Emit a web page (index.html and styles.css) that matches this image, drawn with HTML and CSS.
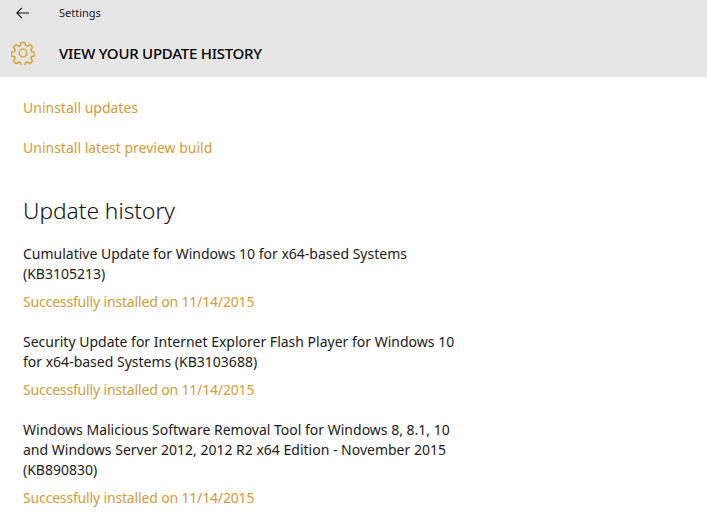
FILE: index.html
```html
<!DOCTYPE html>
<html lang="en">
<head>
<meta charset="utf-8">
<title>Settings</title>
<link rel="stylesheet" href="styles.css">
</head>
<body>
<header class="header">
  <div class="titlebar">
    <svg class="back" width="13" height="12" viewBox="0 0 13 12"><path d="M5.800.8.900 6l4.900 5.200M.9 6H13" fill="none" stroke="#111" stroke-width="1.100"/></svg>
    <span class="app">Settings</span>
  </div>
  <div class="pagebar">
    <svg class="gear" width="24" height="24" viewBox="0 0 26 26"><path d="M10.900 1.600h4.200l.6 3.200 2 .8 2.700-1.800 3 3-1.900 2.700.9 2 3.100.6v4.200l-3.100.6-.9 2 1.900 2.700-3 3-2.700-1.800-2 .8-.6 3.200h-4.200l-.6-3.200-2-.8-2.700 1.800-3-3 1.900-2.700-.9-2-3.100-.6v-4.200l3.100-.6.9-2-1.900-2.700 3-3 2.700 1.800 2-.8z" fill="none" stroke="#d9a233" stroke-width="1.600" stroke-linejoin="round"/><circle cx="13" cy="13" r="4.200" fill="none" stroke="#d9a233" stroke-width="1.600"/></svg>
    <h1 class="pagetitle">VIEW YOUR UPDATE HISTORY</h1>
  </div>
</header>
<main class="content">
  <a class="link first">Uninstall updates</a>
  <a class="link second">Uninstall latest preview build</a>
  <h2 class="section">Update history</h2>
  <section class="item">
    <p class="name">Cumulative Update for Windows 10 for x64-based Systems (KB3105213)</p>
    <p class="status">Successfully installed on 11/14/2015</p>
  </section>
  <section class="item">
    <p class="name">Security Update for Internet Explorer Flash Player for Windows 10 for x64-based Systems (KB3103688)</p>
    <p class="status">Successfully installed on 11/14/2015</p>
  </section>
  <section class="item">
    <p class="name">Windows Malicious Software Removal Tool for Windows 8, 8.1, 10 and Windows Server 2012, 2012 R2 x64 Edition - November 2015 (KB890830)</p>
    <p class="status">Successfully installed on 11/14/2015</p>
  </section>
</main>
</body>
</html>
```
FILE: styles.css
```css
* { box-sizing: border-box; }
html, body { margin: 0; padding: 0; height: 528px; overflow: hidden; background: #fff; }
body { font-family: "Noto Sans", "Open Sans", sans-serif; font-size: 14px; color: #1a1a1a; }
.header { height: 77px; background: #e6e6e6; display: flex; flex-direction: column; }
.titlebar { height: 25px; display: flex; align-items: center; padding-left: 16px; }
.back { display: block; }
.app { margin-left: 30px; font-size: 11px; color: #222; }
.pagebar { height: 52px; display: flex; align-items: center; padding-left: 11px; padding-top: 3px; }
.gear { display: block; }
.pagetitle { margin: 0 0 0 24px; font-size: 15px; font-weight: 500; color: #000; letter-spacing: -0.25px; }
.content { padding: 0 0 0 23px; width: 456px; }
.link { display: block; color: #d09c3a; font-size: 14px; line-height: 20px; }
.first { margin-top: 21px; }
.second { margin-top: 20px; }
.section { margin: 36px 0 0; font-size: 22.7px; font-weight: 300; line-height: 34px; color: #111; }
.item { margin-top: 20px; }
.section + .item { margin-top: 16px; }
.name { margin: 0; line-height: 20px; }
.status { margin: 8px 0 0; line-height: 20px; color: #d09c3a; letter-spacing: -0.16px; }
```
